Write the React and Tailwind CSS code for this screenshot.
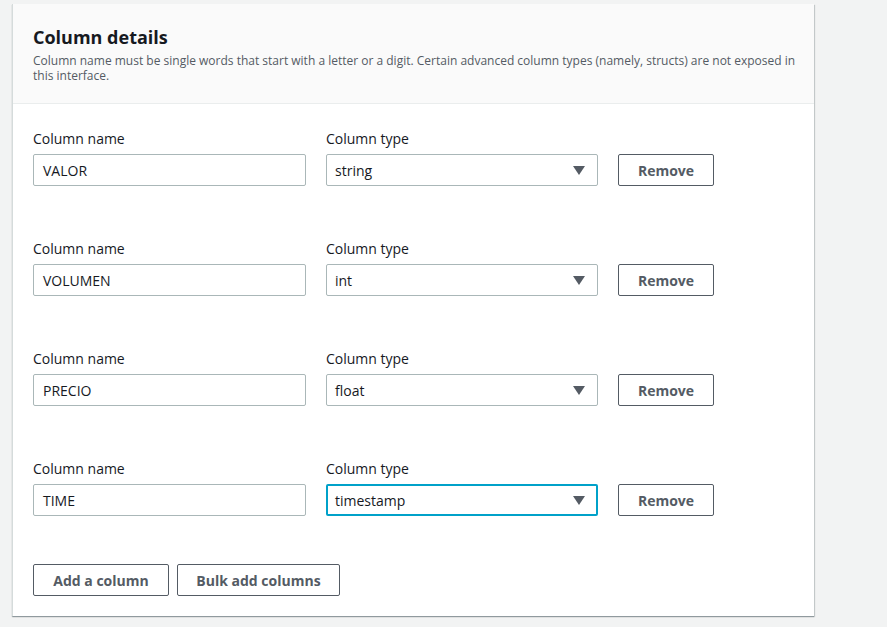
import React from 'react';

const rows = [
  { name: 'VALOR', type: 'string' },
  { name: 'VOLUMEN', type: 'int' },
  { name: 'PRECIO', type: 'float' },
  { name: 'TIME', type: 'timestamp', focused: true },
];

function Caret() {
  return (
    <svg width="12" height="9" viewBox="0 0 12 9" className="shrink-0">
      <path d="M0 0 H12 L6 9 Z" fill="#545b64" />
    </svg>
  );
}

export default function App() {
  return (
    <div
      className="min-h-[627px] w-[887px] bg-[#f2f3f3] pt-[4px] pl-[12px] text-[#16191f]"
      style={{ fontFamily: '"Open Sans", "Liberation Sans", sans-serif' }}
    >
      <div className="w-[802px] bg-white border-l border-[#d5dbdb] shadow-[0_1px_1px_0_rgba(0,28,36,0.3),1px_1px_1px_0_rgba(0,28,36,0.15)]">
        {/* Header */}
        <div className="bg-[#fafafa] border-b border-[#eaeded] pl-[20px] pr-[10px] pt-[21px] pb-[20px]">
          <h2 className="text-[18px] leading-[24px] font-bold text-[#16191f]">Column details</h2>
          <p className="mt-[4px] text-[12px] leading-[15px] text-[#545b64]">
            Column name must be single words that start with a letter or a digit. Certain advanced column types (namely, structs) are not exposed in this interface.
          </p>
        </div>

        {/* Body */}
        <div className="pl-[20px] pt-[25px] pb-[20px]">
          <div className="flex flex-col gap-[53px]">
            {rows.map((r) => (
              <div key={r.name} className="flex items-end">
                <div className="w-[273px]">
                  <div className="text-[14px] leading-[20px] mb-[5px]">Column name</div>
                  <div className="h-[32px] border border-[#aab7b8] rounded-[2px] flex items-center px-[9px] text-[14px]">
                    {r.name}
                  </div>
                </div>
                <div className="w-[272px] ml-[20px]">
                  <div className="text-[14px] leading-[20px] mb-[5px]">Column type</div>
                  <div
                    className={
                      r.focused
                        ? 'h-[32px] border-2 border-[#00a1c9] rounded-[2px] flex items-center justify-between pl-[7px] pr-[11px] text-[14px]'
                        : 'h-[32px] border border-[#aab7b8] rounded-[2px] flex items-center justify-between pl-[8px] pr-[12px] text-[14px]'
                    }
                  >
                    <span>{r.type}</span>
                    <Caret />
                  </div>
                </div>
                <button className="ml-[20px] w-[96px] h-[32px] border border-[#545b64] rounded-[2px] bg-white text-[14px] font-bold text-[#545b64]">
                  Remove
                </button>
              </div>
            ))}
          </div>

          <div className="flex gap-[8px] mt-[48px]">
            <button className="w-[136px] h-[32px] border border-[#545b64] rounded-[2px] bg-white text-[14px] font-bold text-[#545b64]">
              Add a column
            </button>
            <button className="w-[163px] h-[32px] border border-[#545b64] rounded-[2px] bg-white text-[14px] font-bold text-[#545b64]">
              Bulk add columns
            </button>
          </div>
        </div>
      </div>
    </div>
  );
}
